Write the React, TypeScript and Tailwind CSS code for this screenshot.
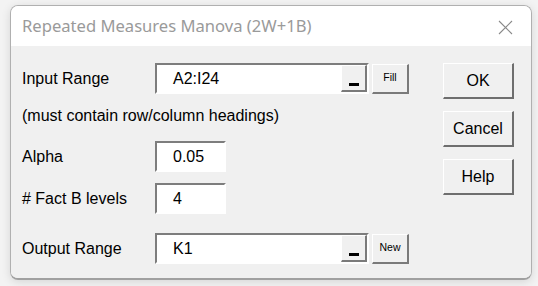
import React from "react"

const font = { fontFamily: '"Liberation Sans", Arial, sans-serif' }

function RefEdit({ value, width }: { value: string; width: string }) {
  return (
    <div className={`flex h-[31px] ${width} border-2 border-t-[#7d7d7d] border-l-[#7d7d7d] border-b-white border-r-white bg-white`}>
      <div className="flex flex-1 items-center pl-[16px] text-[16px] text-black">{value}</div>
      <div className="flex w-[26px] items-end justify-center border-t border-l border-t-white border-l-white border-r-2 border-b-2 border-r-[#7a7a7a] border-b-[#7a7a7a] bg-[#f0f0f0] pb-[4px]">
        <div className="h-[3px] w-[10px] bg-black" />
      </div>
    </div>
  )
}

function SmallButton({ label }: { label: string }) {
  return (
    <button className="ml-[3px] flex h-[30px] w-[37px] items-center justify-center border-t border-l border-t-white border-l-white border-r-2 border-b-2 border-r-[#7a7a7a] border-b-[#7a7a7a] bg-[#f0f0f0] text-[10.5px] text-black">
      {label}
    </button>
  )
}

function TextBox({ value }: { value: string }) {
  return (
    <div className="flex h-[31px] w-[71px] items-center border-2 border-t-[#7d7d7d] border-l-[#7d7d7d] border-b-white border-r-white bg-white pl-[16px] text-[16px] text-black">
      {value}
    </div>
  )
}

function DialogButton({ label }: { label: string }) {
  return (
    <button className="flex h-[36px] w-[71px] items-center justify-center border-t border-l border-t-white border-l-white border-r-2 border-b-2 border-r-[#6e6e6e] border-b-[#6e6e6e] bg-[#f0f0f0] text-[16px] text-black">
      {label}
    </button>
  )
}

export default function App() {
  return (
    <div className="h-[286px] w-[538px] bg-[#f3f3f3] pl-[10px] pt-[5px]" style={font}>
      {/* Window */}
      <div className="flex h-[275px] w-[522px] flex-col overflow-hidden rounded-[8px] border border-[#b0b0b0] border-b-2 border-b-[#a0a0a0] shadow-[0_2px_10px_rgba(0,0,0,0.12)]">
        {/* Title bar */}
        <div className="flex h-[40px] items-center justify-between bg-white pl-[11px] pr-[18px]">
          <span className="text-[16.6px] text-[#9a9a9a]" style={{ fontFamily: '"Noto Sans", sans-serif' }}>
            Repeated Measures Manova (2W+1B)
          </span>
          <svg width="15" height="15" viewBox="0 0 15 15" className="mt-[2px]">
            <path d="M1 1 L14 14 M14 1 L1 14" stroke="#8a8a8a" strokeWidth="1.1" fill="none" />
          </svg>
        </div>

        {/* Body */}
        <div className="flex flex-1 bg-[#f0f0f0] pl-[11px] pt-[17px]">
          {/* Fields */}
          <div className="flex w-[421px] flex-col text-[16px] text-black">
            <div className="flex items-center">
              <span className="w-[133px]">Input Range</span>
              <RefEdit value="A2:I24" width="w-[214px]" />
              <SmallButton label="Fill" />
            </div>
            <div className="mt-[12px] flex h-[20px] items-center">(must contain row/column headings)</div>
            <div className="mt-[15px] flex items-center">
              <span className="w-[133px]">Alpha</span>
              <TextBox value="0.05" />
            </div>
            <div className="mt-[11px] flex items-center">
              <span className="w-[133px]"># Fact B levels</span>
              <TextBox value="4" />
            </div>
            <div className="mt-[19px] flex items-center">
              <span className="w-[133px]">Output Range</span>
              <RefEdit value="K1" width="w-[214px]" />
              <SmallButton label="New" />
            </div>
          </div>

          {/* Buttons */}
          <div className="flex flex-col gap-[12px]">
            <DialogButton label="OK" />
            <DialogButton label="Cancel" />
            <DialogButton label="Help" />
          </div>
        </div>
      </div>
    </div>
  )
}
